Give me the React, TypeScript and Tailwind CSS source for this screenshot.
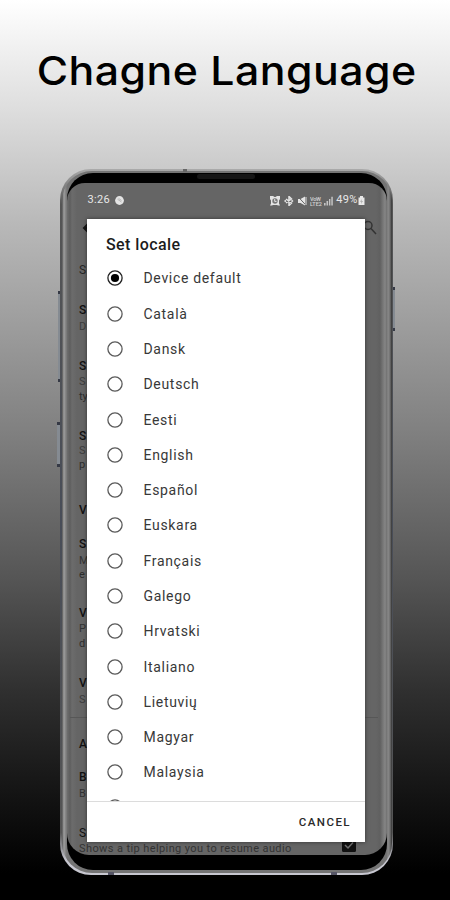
const LANGUAGES = [
  "Device default",
  "Català",
  "Dansk",
  "Deutsch",
  "Eesti",
  "English",
  "Español",
  "Euskara",
  "Français",
  "Galego",
  "Hrvatski",
  "Italiano",
  "Lietuvių",
  "Magyar",
  "Malaysia",
];

/** Settings rows that peek out from under the dialog */
const SETTINGS = [
  { text: "S", row: "h-[40px] text-[12px] text-[#262626]" },
  { text: "S", row: "h-[17px] text-[12px] font-medium text-[#111]" },
  { text: "D", row: "h-[39px] text-[11px] text-[#3d3d3d]" },
  { text: "S", row: "h-[16px] text-[12px] font-medium text-[#111]" },
  { text: "S", row: "h-[15px] text-[11px] text-[#3d3d3d]" },
  { text: "ty", row: "h-[39px] text-[11px] text-[#2d2d2d]" },
  { text: "S", row: "h-[15px] text-[12px] font-medium text-[#111]" },
  { text: "S", row: "h-[14px] text-[11px] text-[#3d3d3d]" },
  { text: "p", row: "h-[45px] text-[11px] text-[#2d2d2d]" },
  { text: "V", row: "h-[34px] text-[12px] font-medium text-[#111]" },
  { text: "S", row: "h-[17px] text-[12px] font-medium text-[#111]" },
  { text: "M", row: "h-[14px] text-[11px] text-[#333]" },
  { text: "e", row: "h-[38px] text-[11px] text-[#2d2d2d]" },
  { text: "V", row: "h-[16px] text-[12px] font-medium text-[#111]" },
  { text: "P", row: "h-[15px] text-[11px] text-[#333]" },
  { text: "d", row: "h-[39px] text-[11px] text-[#2d2d2d]" },
  { text: "V", row: "h-[17px] text-[12px] font-medium text-[#111]" },
  { text: "S", row: "h-[24px] text-[11px] text-[#3d3d3d]" },
];

const SETTINGS_BELOW = [
  { text: "A", row: "h-[33px] text-[12px] font-medium text-[#111]" },
  { text: "B", row: "h-[17px] text-[12px] font-medium text-[#111]" },
  { text: "B", row: "h-[39px] text-[11px] text-[#333]" },
  { text: "S", row: "h-[16px] text-[12px] text-[#111]" },
];

const StatusBar = () => (
  <div className="flex h-[35px] items-center pr-[22px] pl-[21px] text-[11px] tracking-[0.1px] text-[#e8e8e8]">
    <span className="tracking-[0.3px]">3:26</span>
    <svg className="ml-[5px]" width="9" height="9" viewBox="0 0 9 9">
      <circle cx="4.5" cy="4.5" r="4.4" fill="#e4e4e4" />
      <path d="M2.5 3.2l4 2.8M3.5 2.3l3 2.2" stroke="#aaa" strokeWidth=".8" />
    </svg>
    <div className="ml-auto flex items-center">
      <svg width="65" height="10" viewBox="0 0 65 10" fill="#e4e4e4">
        {/* alarm */}
        <path d="M0 0h3l1.500 1h1L7 0h3v3L9 4.500v3L10 9.500H8L7 9H3l-1 .5H0l1-2v-3L0 3z" />
        <circle cx="5" cy="5" r="2.700" fill="#777" />
        <path d="M4.700 3v2.400h1.800" fill="none" stroke="#eee" strokeWidth=".9" />
        {/* bluetooth */}
        <path
          d="M16 3l5.500 4L19 9.500v-9L21.500 3 16 7"
          fill="none"
          stroke="#e4e4e4"
          strokeWidth="1.500"
        />
        <path d="M14 5l1.300-1.300L16.600 5l-1.300 1.300zM20.900 5l1.300-1.300L23.500 5l-1.300 1.300z" />
        {/* mute */}
        <path d="M28 3h2.500L35 .5v9L30.500 7H28z" />
        <path d="M28 .7l7.500 8" stroke="#666" strokeWidth="1" />
        <path d="M36 1v8" stroke="#ddd" strokeWidth="1" />
        {/* signal */}
        <path d="M54 9.500h1.600V7H54zM56.500 9.500h1.600V5h-1.600zM59 9.500h1.400V3H59zM61.300 9.500h1.500V.7h-1.500z" opacity=".75" />
        <g fontFamily="Roboto, sans-serif" fontSize="5.500" fontWeight="500" opacity=".85">
          <text x="40" y="4.600" textLength="11">VoW</text>
          <text x="40" y="9.500" textLength="12">LTE2</text>
        </g>
      </svg>
      <span className="ml-[1px] tracking-[0.3px]">49%</span>
      <svg width="7" height="9" viewBox="0 0 7 9" fill="#e8e8e8">
        <path d="M2 0h3v1.500h1.500V9h-6V1.500H2z" />
        <path d="M3.800 3L2 5.700h1.400L3 8l2-3H3.600z" fill="#aaa" />
      </svg>
    </div>
  </div>
);

const Radio = ({ checked }: { checked: boolean }) => (
  <svg width="16" height="16" viewBox="0 0 16 16">
    <circle
      cx="8"
      cy="8"
      r="7.1"
      fill="none"
      stroke={checked ? "#222" : "#5a5a5a"}
      strokeWidth="1.3"
    />
    {checked && <circle cx="8" cy="8" r="4.1" fill="#000" />}
  </svg>
);

const LocaleDialog = () => (
  <div
    className="absolute top-[36px] left-[20.5px] flex h-[623px] w-[278px] flex-col bg-white shadow-[0_0_4px_rgba(0,0,0,0.5)]"
    role="dialog"
    aria-label="Set locale"
  >
    <div className="flex min-h-0 flex-1 flex-col overflow-hidden">
      <h2 className="h-[41.8px] shrink-0 pt-[16px] pl-[19px] text-[16px] leading-[20px] font-medium tracking-[0.42px] text-[#1c1c1c]">
        Set locale
      </h2>
      {LANGUAGES.map((name, i) => (
        <label key={name} className="flex h-[35.29px] shrink-0 items-center pl-[20px]">
          <Radio checked={i === 0} />
          <span className="ml-[20.5px] pt-[1px] text-[14px] tracking-[0.68px] text-[#383838]">
            {name}
          </span>
        </label>
      ))}
      <div className="shrink-0 pt-[9px] pl-[20px]">
        <Radio checked={false} />
      </div>
    </div>
    <div className="flex h-[41px] shrink-0 items-center justify-end border-t border-[#dcdcdc] pt-[1px] pr-[14px] text-[11.5px] font-medium tracking-[1.45px] text-[#2a2a2a]">
      CANCEL
    </div>
  </div>
);

const SideKey = ({ className }: { className: string }) => (
  <div className={`absolute w-[3px] border-y-[3px] border-[#353945] bg-[#858b92] ${className}`} />
);

export default function App() {
  return (
    <main className="flex h-[900px] w-[450px] flex-col items-center overflow-hidden bg-[linear-gradient(180deg,#fff_0%,#dedede_12%,#b8b8b8_25%,#808080_48%,#565656_64%,#2f2f2f_77%,#121212_89%,#000_97%)] font-['Roboto',sans-serif]">
      <h1 className="flex h-[169px] shrink-0 origin-center scale-x-[1.07] items-start pt-[47px] pl-[3px] font-['Inter',sans-serif] text-[40px] leading-[48px] font-medium tracking-[0.45px] whitespace-nowrap text-black">
        Chagne Language
      </h1>

      <div className="relative ml-[3px] h-[706px] w-[333px] shrink-0">
        <SideKey className="top-[122px] -left-[2px] h-[91px]" />
        <SideKey className="top-[253px] -left-[3px] h-[45px]" />
        <SideKey className="top-[118px] -right-[2px] h-[44px]" />

        <div className="relative h-full rounded-[31px] bg-[linear-gradient(180deg,#aaa_0%,#555_5%,#484d58_50%,#555_94%,#c7c7d0_98%)] p-[1.5px] pb-[2.5px]">
          <div className="h-full rounded-[30px] bg-[linear-gradient(90deg,#555_0px,#a0a0a0_2px,#8c8c8c_3px,#747474_5px,#747474_325px,#8b8b8b_326px,#707070_328px,#333_330px)] px-[5px] pt-[2px] pb-[3px]">
            <div className="h-full rounded-[26px] bg-black pt-[10.5px] pb-[14.5px]">
              <div className="relative h-full">
                <div className="absolute -top-[9px] left-[130px] h-[5px] w-[58px] rounded-full bg-[#151515]" />
                <div className="relative h-full overflow-hidden rounded-t-[18px] rounded-b-[22px] bg-[linear-gradient(90deg,#6e6e6e_0px,#5e5e5e_3px,#6c6c6c_5px,#656565_10px,#656565_309px,#606060_313px,#777_316px,#858585_318px,#707070_320px)]">
                  <StatusBar />
                  <div className="flex h-[45px] justify-between pt-[1px] pr-[9px] pl-[15px]">
                    <svg width="12" height="18" viewBox="0 0 12 18" fill="none">
                      <path d="M6 5L2 9l4 4M2 9h10" stroke="#151515" strokeWidth="2" />
                    </svg>
                    <svg width="16" height="18" viewBox="0 0 16 18" fill="none">
                      <circle cx="6" cy="6.5" r="4" stroke="#333" strokeWidth="1.5" />
                      <path d="M9 9.5l5 5.5" stroke="#333" strokeWidth="1.5" />
                    </svg>
                  </div>
                  <div className="pl-[12.5px] leading-[14px]">
                    {SETTINGS.map(({ text, row }, i) => (
                      <div key={i} className={row}>{text}</div>
                    ))}
                  </div>
                  <div className="mr-[9px] ml-[3px] h-[20px] border-t border-[#575757]" />
                  <div className="pl-[12.5px] leading-[14px]">
                    {SETTINGS_BELOW.map(({ text, row }, i) => (
                      <div key={i} className={row}>{text}</div>
                    ))}
                    <div className="flex items-start justify-between pr-[31px] text-[11px] tracking-[0.4px] text-[#333]">
                      <span>Shows a tip helping you to resume audio</span>
                      <svg className="-mt-[3px]" width="14" height="13" viewBox="0 0 14 13">
                        <rect width="14" height="13" rx="1.5" fill="#111" />
                        <path d="M3 6l3 3 5-5.5" fill="none" stroke="#707070" strokeWidth="1.5" />
                      </svg>
                    </div>
                  </div>
                </div>
                <LocaleDialog />
              </div>
            </div>
          </div>
        </div>
        <div className="absolute bottom-0 left-[48px] h-[3px] w-[6px] bg-[#555566]" />
        <div className="absolute right-[56px] bottom-0 h-[3px] w-[6px] bg-[#555566]" />
        <div className="absolute top-0 left-[123px] h-[3px] w-[4px] bg-[#666]" />
      </div>
    </main>
  );
}
